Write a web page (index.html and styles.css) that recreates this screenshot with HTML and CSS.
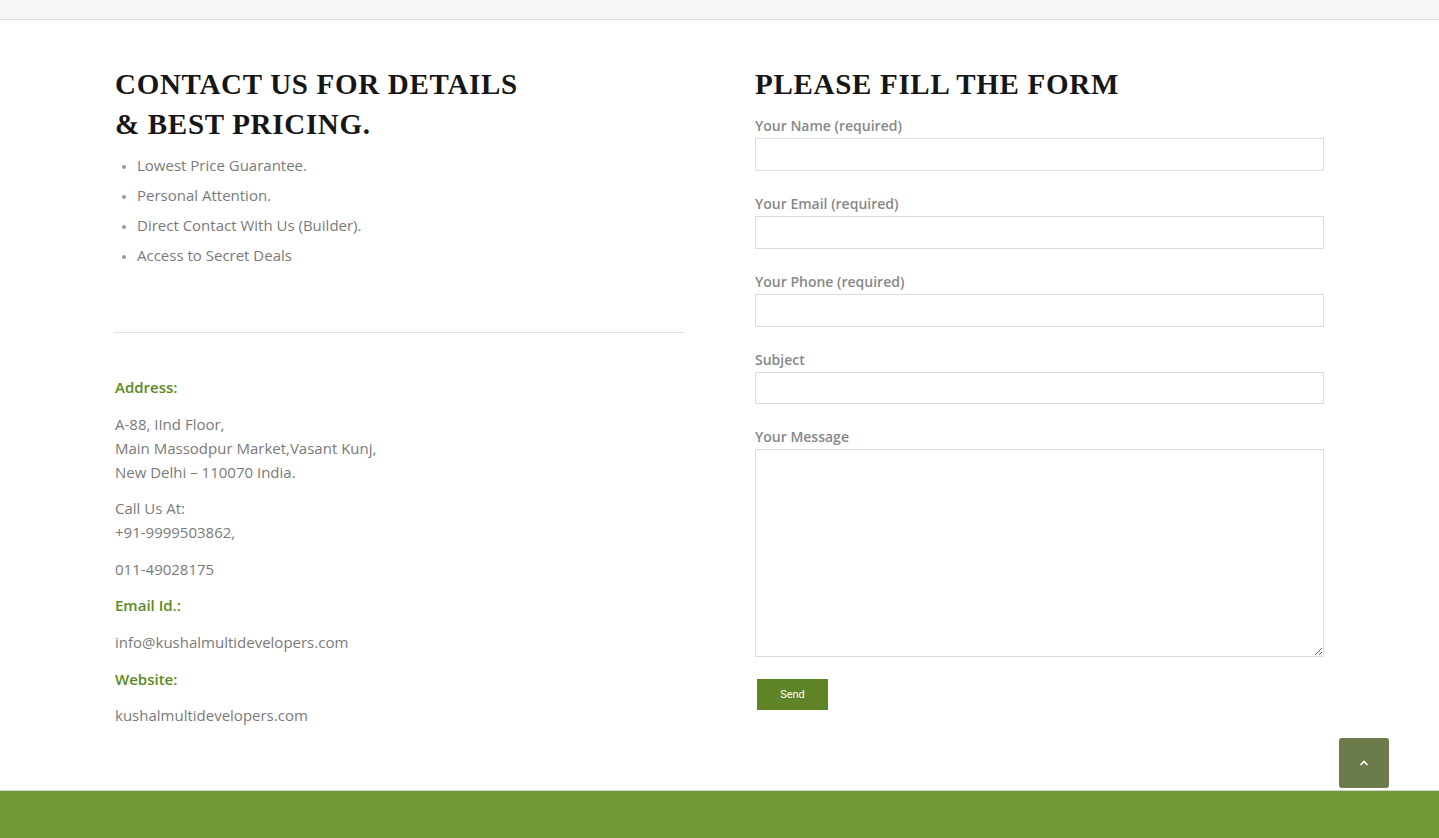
FILE: index.html
```html
<!DOCTYPE html>
<html>
<head>
<meta charset="utf-8">
<link rel="stylesheet" href="styles.css">
</head>
<body>
<div class="topbar"></div>
<main class="main">
  <section class="col left">
    <h2 class="heading">CONTACT US FOR DETAILS<br>&amp; BEST PRICING.</h2>
    <ul class="perks">
      <li>Lowest Price Guarantee.</li>
      <li>Personal Attention.</li>
      <li>Direct Contact With Us (Builder).</li>
      <li>Access to Secret Deals</li>
    </ul>
    <hr class="divider">
    <div class="info">
      <p class="label">Address:</p>
      <p>A-88, IInd Floor,<br>Main Massodpur Market,Vasant Kunj,<br>New Delhi – 110070 India.</p>
      <p>Call Us At:<br>+91-9999503862,</p>
      <p>011-49028175</p>
      <p class="label">Email Id.:</p>
      <p>info@kushalmultidevelopers.com</p>
      <p class="label">Website:</p>
      <p>kushalmultidevelopers.com</p>
    </div>
  </section>
  <section class="col right">
    <h2 class="heading">PLEASE FILL THE FORM</h2>
    <form class="form">
      <label class="field"><span class="flabel">Your Name (required)</span><input type="text" class="input"></label>
      <label class="field"><span class="flabel">Your Email (required)</span><input type="text" class="input"></label>
      <label class="field"><span class="flabel">Your Phone (required)</span><input type="text" class="input"></label>
      <label class="field"><span class="flabel">Subject</span><input type="text" class="input subject"></label>
      <label class="field"><span class="flabel">Your Message</span><textarea class="textarea"></textarea></label>
      <button type="button" class="send">Send</button>
    </form>
  </section>
</main>
<a class="totop" href="#"><svg width="10" height="6" viewBox="0 0 10 6"><path d="M1.5 5 L5 1.5 L8.5 5" fill="none" stroke="#fff" stroke-width="1.6"/></svg></a>
<footer class="footer"></footer>
</body>
</html>
```

FILE: styles.css
```css
* { box-sizing: border-box; }
html, body { margin: 0; padding: 0; }
body {
  background: #fff;
  font-family: "Open Sans", "Liberation Sans", sans-serif;
  font-size: 15px;
  color: #7a7a7a;
  position: relative;
  min-height: 838px;
}
.topbar {
  height: 20px;
  background: #f6f6f6;
  border-bottom: 1px solid #dcdcdc;
}
.main {
  width: 1209px;
  margin: 0 auto;
  display: grid;
  grid-template-columns: 569px 569px;
  column-gap: 71px;
  padding-top: 44px;
  height: 770px;
}
.heading {
  margin: 0;
  font-family: "Liberation Serif", serif;
  font-weight: bold;
  font-size: 29px;
  line-height: 40px;
  letter-spacing: 0.7px;
  color: #161616;
}
.perks {
  margin: 6px 0 0;
  padding: 0 0 0 22px;
  list-style: disc;
  line-height: 30px;
  color: #7a7a7a;
}
.perks li::marker { color: #999; font-size: 12px; }
.divider {
  border: 0;
  border-top: 1px solid #e1e1e1;
  margin: 62px 0 0;
}
.info { padding-top: 42px; line-height: 24px; }
.info p { margin: 0 0 12.6px; }
.info .label { color: #5b8a1c; font-weight: 600; }
.form { display: flex; flex-direction: column; margin-top: 14px; }
.field { display: flex; flex-direction: column; margin-bottom: 25px; }
.flabel {
  font-size: 14px;
  font-weight: 600;
  color: #888;
  line-height: 16px;
  margin-bottom: 4px;
}
.input {
  height: 33px;
  border: 1px solid #dcdcdc;
  background: #fff;
  margin: 0;
  padding: 0 8px;
  font: inherit;
  width: 100%;
}
.input.subject { height: 32px; }
.textarea {
  height: 208px;
  border: 1px solid #dcdcdc;
  background: #fff;
  margin: 0;
  font: inherit;
  width: 100%;
  resize: vertical;
}
.send {
  align-self: flex-start;
  margin: -3px 0 0 2px;
  width: 71px;
  height: 31px;
  border: 0;
  background: #5e8427;
  color: #fff;
  font-family: "Roboto", "Liberation Sans", sans-serif;
  font-size: 11px;
  padding: 0;
}
.totop {
  position: absolute;
  left: 1339px;
  top: 738px;
  width: 50px;
  height: 50px;
  border-radius: 3px;
  background: #6b7b4c;
  display: flex;
  align-items: center;
  justify-content: center;
}
.footer {
  height: 48px;
  background: #709a36;
  border-top: 1px solid #d6d6d6;
}
```
